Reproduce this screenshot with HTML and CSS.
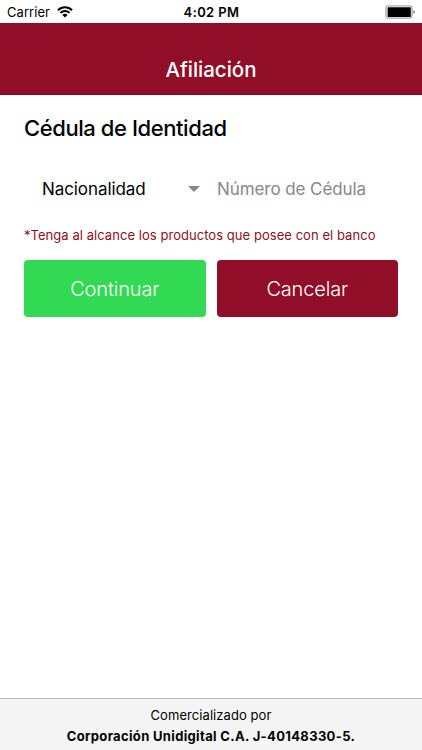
FILE: index.html
```html
<!DOCTYPE html>
<html lang="es">
<head>
<meta charset="utf-8">
<title>Afiliación</title>
<link rel="stylesheet" href="styles.css">
</head>
<body>
<div class="screen">
  <div class="status">
    <div class="carrier"><span>Carrier</span>
      <svg class="wifi" width="16" height="12" viewBox="0 0 16 12"><path d="M1 4.2a10 10 0 0 1 14 0M3.4 6.9a6.5 6.5 0 0 1 9.2 0" fill="none" stroke="#000" stroke-width="2"/><path d="M8 11.6 5.4 9a3.7 3.7 0 0 1 5.2 0z"/></svg>
    </div>
    <div class="clock">4:02 PM</div>
    <svg class="battery" width="30" height="14" viewBox="0 0 30 14"><rect x=".9" y=".9" width="26.2" height="12.2" rx="3" fill="none" stroke="#aaa" stroke-width="1.4"/><rect x="2.6" y="2.2" width="23.2" height="9.8" rx="1"/><path d="M28.5 5.2q1.3.5 1.3 1.8t-1.3 1.8z" fill="#555"/></svg>
  </div>
  <header class="header"><h1>Afiliación</h1></header>
  <main class="content">
    <h2>Cédula de Identidad</h2>
    <div class="fields">
      <div class="select"><span>Nacionalidad</span><i class="caret"></i></div>
      <div class="number">Número de Cédula</div>
    </div>
    <p class="hint">*Tenga al alcance los productos que posee con el banco</p>
    <div class="actions"><button class="go">Continuar</button><button class="cancel">Cancelar</button></div>
  </main>
  <footer class="footer"><div class="by">Comercializado por</div><div class="corp">Corporación Unidigital C.A. J-40148330-5.</div></footer>
</div>
</body>
</html>
```
FILE: styles.css
```css
* { box-sizing: border-box; margin: 0; padding: 0; }
body { font-family: Inter, sans-serif; background: #fff; color: #000; }
.screen { height: 750px; display: flex; flex-direction: column; }
.status { height: 23px; display: grid; grid-template-columns: 1fr auto 1fr; align-items: center; padding: 0 7px; font-size: 13px; line-height: 22px; }
.carrier { display: flex; align-items: center; gap: 7px; padding-top: 1px; letter-spacing: .05px; }
.clock { font-weight: 600; letter-spacing: .38px; padding: 1px 0 0 1px; }
.battery { justify-self: end; }
.header { height: 72px; background: #900e27; border-bottom: 1px solid #780b20; color: #fff; padding-top: 34px; text-align: center; }
.header h1 { font-size: 20.5px; line-height: 26px; font-weight: 500; }
.content { flex: 1; padding: 20px 24px 0; }
h2 { font-size: 22px; line-height: 27px; font-weight: 500; letter-spacing: -.42px; }
.fields { display: flex; height: 36px; margin-top: 29px; align-items: center; font-size: 17px; letter-spacing: -.08px; }
.select { width: 193px; padding: 0 17px 0 18px; display: flex; align-items: center; justify-content: space-between; }
.caret { border: 6px solid transparent; border-top-color: #888; border-bottom: 0; }
.number { color: #888; }
.hint { color: #900e27; font-size: 13px; line-height: 18px; letter-spacing: .05px; margin-top: 19px; }
.actions { display: flex; gap: 11px; margin-top: 16px; }
button { flex: 1; height: 57px; border: 0; border-radius: 4px; color: #fff; font: 300 20px Inter, sans-serif; letter-spacing: -.15px; }
.go { background: #32d953; }
.cancel { background: #900e27; }
.footer { height: 52px; background: #f5f5f5; border-top: 1px solid #b9b9b9; text-align: center; font-size: 13px; line-height: 21px; padding-top: 6px; }
.by { letter-spacing: .07px; }
.corp { font-weight: 700; letter-spacing: .34px; }
```
